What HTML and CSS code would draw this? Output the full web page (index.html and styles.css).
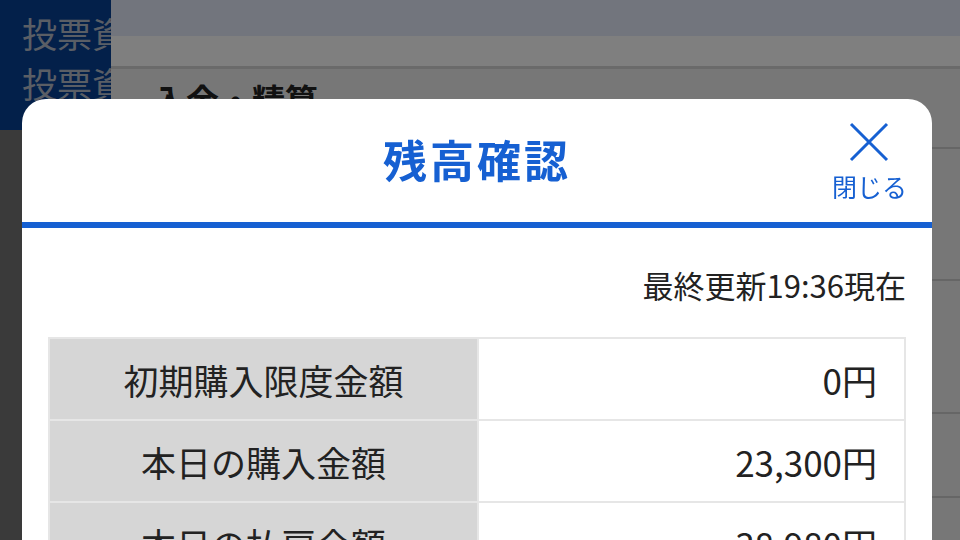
FILE: index.html
```html
<!DOCTYPE html>
<html lang="ja">
<head>
    <meta charset="UTF-8">
    <meta name="viewport" content="width=device-width, initial-scale=1.0">
    <title>残高確認</title>
    <link rel="stylesheet" href="styles.css">
</head>
<body>

    <!-- 背面のページ -->
    <div class="page">
        <aside class="side">
            <div class="side-top">
                <p class="side-item">投票資金</p>
                <p class="side-item">投票資金</p>
            </div>
        </aside>
        <main class="main">
            <div class="topbar"></div>
            <div class="subbar"></div>
            <div class="content">
                <h1 class="page-title">入金・精算</h1>
                <div class="row row-1"></div>
                <div class="row row-2"></div>
                <div class="row row-3"></div>
                <div class="row row-4"></div>
            </div>
        </main>
    </div>

    <!-- モーダル -->
    <div class="overlay"></div>
    <div class="modal">
        <div class="modal-header">
            <h2 class="modal-title">残高確認</h2>
            <button class="close-btn">
                <svg class="close-icon" width="40" height="40" viewBox="0 0 40 40">
                    <path d="M2 2 L38 38 M38 2 L2 38" stroke="#1660d2" stroke-width="3" fill="none"/>
                </svg>
                <span class="close-label">閉じる</span>
            </button>
        </div>

        <div class="modal-body">
            <p class="updated">最終更新19:36現在</p>

            <table class="balance">
                <tr>
                    <th>初期購入限度金額</th>
                    <td>0円</td>
                </tr>
                <tr>
                    <th>本日の購入金額</th>
                    <td>23,300円</td>
                </tr>
                <tr>
                    <th>本日の払戻金額</th>
                    <td>38,980円</td>
                </tr>
            </table>
        </div>
    </div>

</body>
</html>
```

FILE: styles.css
```css
body {
    margin: 0;
    font-family: "Noto Sans CJK JP", "Noto Sans", sans-serif;
    color: #222;
    overflow: hidden;
    height: 540px;
}

/* 背面のページ */
.page {
    display: flex;
    height: 540px;
}

.side {
    width: 111px;
    flex-shrink: 0;
    background-color: #747474;
    overflow: hidden;
}

.side-top {
    height: 130px;
    background-color: #064094;
    padding: 8px 0 0 22px;
    box-sizing: border-box;
}

.side-item {
    margin: 0;
    font-size: 35px;
    line-height: 50px;
    color: #b4bccb;
    white-space: nowrap;
}

.main {
    flex: 1;
    background-color: #eeeeee;
}

.topbar {
    height: 36px;
    background-color: #e4eafb;
}

.subbar {
    height: 30px;
    background-color: #fefefe;
    border-bottom: 3px solid #d4d4d4;
}

.content {
    padding-left: 42px;
}

.page-title {
    margin: 0;
    font-size: 33px;
    line-height: 60px;
    color: #222;
}

.row {
    border-bottom: 2px solid #cccccc;
    margin-left: -42px;
}

.row-1 { height: 18px; }
.row-2 { height: 130px; }
.row-3 { height: 131px; }
.row-4 { height: 82px; }

.overlay {
    position: fixed;
    inset: 0;
    background-color: rgba(0, 0, 0, 0.5);
}

/* モーダル */
.modal {
    position: absolute;
    left: 22px;
    top: 99px;
    width: 910px;
    height: 600px;
    background-color: #fff;
    border-radius: 24px 24px 0 0;
}

.modal-header {
    position: relative;
    height: 123px;
    display: flex;
    align-items: center;
    justify-content: center;
    border-bottom: 6px solid #1660d2;
}

.modal-title {
    margin: 0;
    font-size: 44px;
    font-weight: bold;
    color: #1660d2;
    letter-spacing: 3px;
    padding-bottom: 4px;
}

.close-btn {
    position: absolute;
    right: 25px;
    top: 23px;
    display: flex;
    flex-direction: column;
    align-items: center;
    border: none;
    background: none;
    padding: 0;
    cursor: pointer;
}

.close-icon {
    display: block;
}

.close-label {
    font-family: "Noto Sans CJK JP", sans-serif;
    font-size: 25px;
    line-height: 32px;
    margin-top: 8px;
    color: #1660d2;
}

.modal-body {
    padding: 0 26px;
}

.updated {
    margin: 35px 0 30px;
    text-align: right;
    font-size: 31px;
    line-height: 44px;
    color: #222;
}

.balance {
    width: 100%;
    border-collapse: collapse;
    border: 2px solid #e2e2e2;
}

.balance th,
.balance td {
    height: 80px;
    border: 2px solid #e6e6e6;
    font-size: 35px;
    font-weight: normal;
    padding: 0 27px;
}

.balance th {
    width: 373px;
    background-color: #d6d6d6;
    text-align: center;
}

.balance td {
    text-align: right;
}
```
